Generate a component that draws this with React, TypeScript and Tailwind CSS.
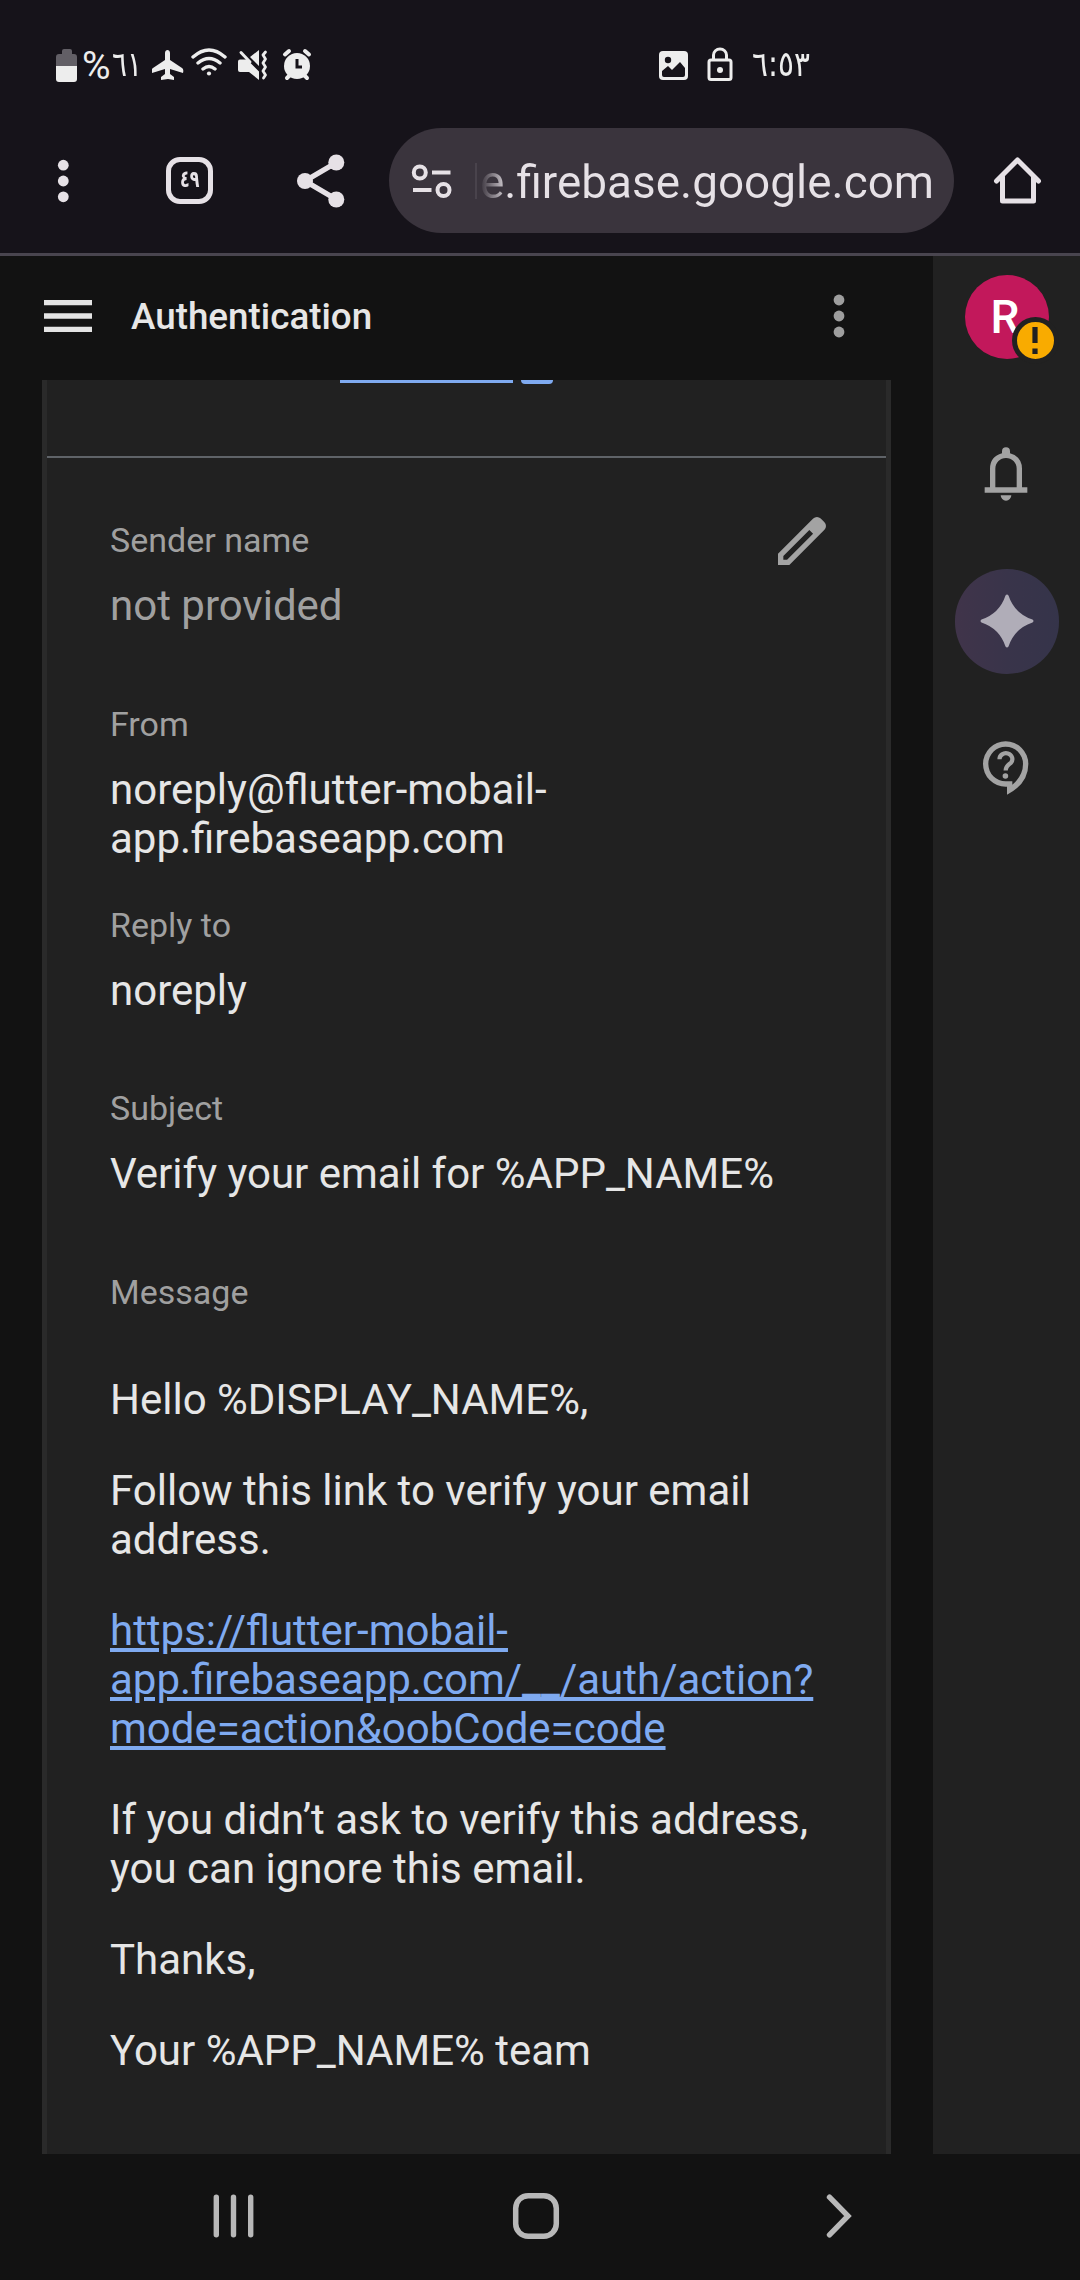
import React from "react";

const Field = ({ label, children, muted }: { label: string; children: React.ReactNode; muted?: boolean }) => (
  <section>
    <h2 className="text-[34px] leading-[49px] text-[#a0a0a0]">{label}</h2>
    <p className={muted ? "mt-4 text-[42px] leading-[49px] text-[#a0a0a0]" : "mt-4 text-[42px] leading-[49px]"}>
      {children}
    </p>
  </section>
);

const StatusBar = () => (
  <div className="flex h-[128px] items-start pt-[46px] text-[#ededed]">
    <svg className="ml-[56px] h-[40px] w-[21px]" viewBox="0 0 21 40">
      <path d="M6 8V5q0-2 2-2h6q2 0 2 2v3h2q3 0 3 3v9H0v-9q0-3 3-3z" fill="#625f66" />
      <path d="M0 20h21v13q0 3-3 3H3q-3 0-3-3z" fill="#ededed" />
    </svg>
    <div className="ml-[5px] flex h-[40px] w-[57px] items-center" dir="ltr">
      <span className="font-['Roboto'] text-[39px] leading-[40px]">%</span>
      <span className="ml-[1px] mt-[-4px] inline-block origin-left scale-x-[.8] font-['DejaVu_Sans',sans-serif] text-[35px] leading-[40px]">٦١</span>
    </div>
    <svg className="ml-[13px] h-[40px] w-[32px]" viewBox="0 0 32 40" fill="currentColor">
      <path d="M13 7c0-4 5-4 5 0v7l12 8q2 1 1 5l-13-4v5l4 3v3l-6-1-7 1v-3l4-3v-5L0 27q-1-4 1-5l12-8z" />
    </svg>
    <svg className="ml-[6px] h-[40px] w-[38px]" viewBox="0 0 38 40" fill="none" stroke="currentColor" strokeWidth="3.4" strokeLinecap="round">
      <path d="M3 11Q19-3 35 11M8 17q11-9 22 0M13 23q6-5 12 0" />
      <circle cx="19" cy="27.500" r="2.1" fill="currentColor" stroke="none" />
    </svg>
    <svg className="ml-[10px] h-[40px] w-[31px]" viewBox="0 0 31 40" fill="currentColor">
      <path d="M2 13.500h7L21 25.500V34L11 26H2q-2 0-2-2v-8.500q0-2 2-2zM12 11l9-7v16z" />
      <path d="M3 6.500l9 9.500" stroke="currentColor" strokeWidth="3" strokeLinecap="round" />
      <path d="M27.500 6l-2.500 3 2.500 4-2.500 4 2.500 4-2.500 4 2.500 4-2 3" fill="none" stroke="currentColor" strokeWidth="2.800" strokeLinecap="round" strokeLinejoin="round" />
    </svg>
    <svg className="ml-[13px] h-[40px] w-[30px]" viewBox="0 0 30 40" fill="none" stroke="currentColor" strokeWidth="4" strokeLinecap="round">
      <circle cx="15" cy="20" r="13" fill="currentColor" stroke="none" />
      <path d="M3 8.500l4-3.500M27 8.500l-4-3.500M5 32l3-3M25 32l-3-3" />
      <path d="M15 13v8h5" stroke="#16131a" strokeWidth="3" strokeLinecap="butt" />
    </svg>
    <svg className="ml-[347px] h-[40px] w-[29px]" viewBox="0 0 29 40">
      <rect y="5" width="29" height="29" rx="4" fill="currentColor" />
      <circle cx="9" cy="14" r="3.200" fill="#16131a" />
      <path d="M3 25l6-5 4 4 8-8 5 6v7q0 2-2 2H5q-2 0-2-2z" fill="#16131a" />
    </svg>
    <svg className="ml-[19px] h-[40px] w-[26px]" viewBox="0 0 26 40" fill="none" stroke="currentColor" strokeWidth="3">
      <rect x="2" y="14" width="22" height="19.500" rx="2" />
      <path d="M6.500 14V9a6.500 6 0 0 1 13 0v5" />
      <circle cx="13" cy="24" r="3" fill="currentColor" stroke="none" />
    </svg>
    <span className="ml-[19px] mt-[-2px] inline-block origin-left scale-x-[.85] font-['DejaVu_Sans',sans-serif] text-[35px] leading-[40px]" dir="ltr">٦:٥٣</span>
  </div>
);

const BrowserBar = () => (
  <div className="flex h-[125px] items-start">
    <div className="flex h-[105px] w-[389px] items-center">
      <svg className="ml-[57px] h-[44px] w-[12px]" viewBox="0 0 12 44" fill="#e6e1e6">
        <circle cx="6.300" cy="6.200" r="5.400" /><circle cx="6.300" cy="22" r="5.400" /><circle cx="6.300" cy="37.800" r="5.400" />
      </svg>
      <div className="ml-[97px] flex h-[47px] w-[47px] items-center justify-center rounded-[14px] border-[5px] border-[#e6e1e6] pb-1 text-[#e6e1e6]" dir="ltr">
        <span className="inline-block scale-x-[.66] font-['DejaVu_Sans',sans-serif] text-[24px] font-bold leading-[36px]">٤٩</span>
      </div>
      <svg className="ml-[84px] h-[54px] w-[48px]" viewBox="0 0 48 54" fill="#e6e1e6">
        <path d="M39.500 8.500L8 27l31.500 18.500" fill="none" stroke="#e6e1e6" strokeWidth="5.300" />
        <circle cx="39.300" cy="8.500" r="8" /><circle cx="8" cy="27" r="8" /><circle cx="39.300" cy="45.500" r="8" />
      </svg>
    </div>
    <div className="flex h-[105px] w-[565px] items-center overflow-hidden rounded-full bg-[#3a343d]">
      <svg className="ml-[22px] h-[36px] w-[42px]" viewBox="0 0 42 36" fill="none" stroke="#e6e1e6" strokeWidth="4">
        <circle cx="8.800" cy="9.500" r="6" /><path d="M21 9.500h18.500M2 27h18.500" /><circle cx="32.500" cy="27" r="6" />
      </svg>
      <div className="ml-[22px] h-[36px] w-[2px] bg-[#49434c]" />
      <span className="ml-[3px] mt-[2px] whitespace-nowrap bg-linear-to-r from-[#3a343d] to-[#e6e1e6] to-[28px] bg-clip-text font-['Roboto'] text-[45.9px] leading-[60px] text-transparent">
        e.firebase.google.com
      </span>
    </div>
    <svg className="ml-[39px] mt-[28px] h-[50px] w-[50px]" viewBox="0 0 50 50" fill="none" stroke="#e6e1e6" strokeWidth="5" strokeLinejoin="round" strokeLinecap="round">
      <path d="M3.500 25L24.500 4l21 21" /><path d="M9.500 21v24h31V21" />
    </svg>
  </div>
);

const AppHeader = () => (
  <header className="flex h-[124px] items-center">
    <svg className="ml-[44px] mt-[-4px] h-[32px] w-[48px]" viewBox="0 0 48 32" fill="#e3e3e3">
      <path d="M0 0h48v5.300H0zM0 13.300h48v5.400H0zM0 26.700h48V32H0z" />
    </svg>
    <h1 className="ml-[39px] mt-[-2px] text-[36.8px] leading-[48px] font-medium text-[#e6e6e6]">Authentication</h1>
    <svg className="ml-auto mr-[88px] mt-[-4px] h-[44px] w-[12px]" viewBox="0 0 12 44" fill="#9e9e9e">
      <circle cx="6" cy="6" r="5.400" /><circle cx="6" cy="22" r="5.400" /><circle cx="6" cy="38" r="5.400" />
    </svg>
  </header>
);

const Template = () => (
  <main className="mx-[42px] h-[1774px] overflow-hidden border-x-[5px] border-[#2a2a2a] bg-[#212121] text-[#e6e6e6]">
    <div className="flex h-[76px] items-start">
      <div className="ml-[293px] h-[3px] w-[173px] bg-[#7faaf0]" />
      <div className="ml-[8px] h-[4px] w-[32px] rounded-b-[4px] bg-[#7faaf0]" />
    </div>
    <div className="h-[2px] bg-[#5f6368]" />
    <div className="relative flex flex-col pl-[63px] pt-[58px]">
      <svg className="absolute left-[723px] top-[51px] h-[64px] w-[64px]" viewBox="0 0 24 24" fill="#a3a3a3">
        <path fillRule="evenodd" d="M3 21v-4.250L16.200 3.575a2 2 0 0 1 2.825 0L20.425 5a2 2 0 0 1 0 2.800L7.250 21zM5 19h1.400l9.750-9.750-1.400-1.400L5 17.600z" />
      </svg>
      <Field label="Sender name" muted>not provided</Field>
      <div className="mt-[70px]"><Field label="From">noreply@flutter-mobail-<br />app.firebaseapp.com</Field></div>
      <div className="mt-[38px]"><Field label="Reply to">noreply</Field></div>
      <div className="mt-[69px]"><Field label="Subject">Verify your email for %APP_NAME%</Field></div>
      <h2 className="mt-[70px] text-[34px] leading-[49px] text-[#a0a0a0]">Message</h2>
      <div className="mt-[58px] flex flex-col gap-[42px] whitespace-nowrap text-[42px] leading-[49px]">
        <p>Hello %DISPLAY_NAME%,</p>
        <p>Follow this link to verify your email<br />address.</p>
        <p>
          <a className="text-[#7faaf0] underline decoration-[4px] underline-offset-[3px]">https://flutter-mobail-<br />app.firebaseapp.com/__/auth/action?<br />mode=action&amp;oobCode=code</a>
        </p>
        <p>If you didn’t ask to verify this address,<br />you can ignore this email.</p>
        <p>Thanks,</p>
        <p>Your %APP_NAME% team</p>
      </div>
    </div>
  </main>
);

const Rail = () => (
  <aside className="flex h-[1898px] w-[147px] flex-col items-center bg-[#212121]">
    <div className="relative mt-[19px] flex h-[84px] w-[84px] items-center justify-center rounded-full bg-[#c2185b] text-[46px] font-medium text-white">
      <span className="mr-[3px]">R</span>
      <div className="absolute left-[47px] top-[42px] flex h-[47px] w-[47px] items-center justify-center rounded-full border-[5px] border-[#212121] bg-[#f9ab00]">
        <svg className="h-[27px] w-[6px]" viewBox="0 0 6 27" fill="#212121"><path d="M.400 0h5.200v16H.400zM.400 21.500h5.200v5.500H.400z" /></svg>
      </div>
    </div>
    <svg className="mr-px mt-[83px] h-[64px] w-[64px]" viewBox="0 0 24 24" fill="#a3a3a3">
      <path fillRule="evenodd" d="M4 19v-2h2v-7q0-4.500 4.500-5.800v-.7a1.500 1.500 0 0 1 3 0v.7Q18 5.500 18 10v7h2v2zm4-2h8v-7a4 4 0 0 0-8 0zM10 20h4a2 2 0 0 1-4 0z" />
    </svg>
    <div className="mt-[63px] flex h-[105px] w-[104px] items-center justify-center rounded-full bg-linear-to-r from-[#40344a] via-[#39344a] to-[#35344a]">
      <svg className="mb-[2px] h-[54px] w-[54px]" viewBox="0 0 54 54" fill="#b0adb8">
        <path d="M25.500 1.500q1.500-2 3 0 6 18 24 24 2 1.500 0 3-18 6-24 24-1.500 2-3 0-6-18-24-24-2-1.500 0-3 18-6 24-24z" />
      </svg>
    </div>
    <svg className="mt-[62px] h-[64px] w-[64px]" viewBox="0 0 24 24" fill="none" stroke="#a3a3a3">
      <path d="M12 22v-3h-.5A8.500 8.500 0 1 1 20 10.500Q20 18 12 22zm2-3.700q4-3.500 4-7.800a6.500 6.500 0 1 0-6.500 6.500H14z" fill="#a3a3a3" fillRule="evenodd" stroke="none" />
      <path d="M9.200 8.700a2.400 2.200 0 1 1 4.300 1.300q-2 1.400-2 2.900" strokeWidth="1.600" />
      <circle cx="11.400" cy="15" r="1.050" fill="#a3a3a3" stroke="none" />
    </svg>
  </aside>
);

const NavBar = () => (
  <nav className="h-[126px] bg-[#121212]">
    <div className="flex h-[123px] items-center">
      <svg className="ml-[213px] h-[44px] w-[41px]" viewBox="0 0 41 44" stroke="#b8b8b8" strokeWidth="5.400" strokeLinecap="round"><path d="M3.300 3.200v37.600M20.500 3.200v37.600M37.700 3.200v37.600" /></svg>
      <svg className="ml-[258px] h-[48px] w-[48px]" viewBox="0 0 48 48" fill="none" stroke="#b8b8b8" strokeWidth="5.500"><rect x="3.700" y="3.700" width="40.600" height="40.600" rx="12.500" /></svg>
      <svg className="ml-[266px] h-[44px] w-[28px]" viewBox="0 0 28 44" fill="none" stroke="#b8b8b8" strokeWidth="5.400" strokeLinecap="round"><path d="M3.500 3.200L22 22 3.500 40.800" /></svg>
    </div>
  </nav>
);

export default function App() {
  return (
    <div className="h-[2280px] w-[1080px] overflow-hidden bg-[#121212] font-['Roboto',sans-serif]">
      <div className="h-[256px] border-b-[3px] border-[#49454f] bg-[#16131a]">
        <StatusBar />
        <BrowserBar />
      </div>
      <div className="flex h-[1898px]">
        <div className="w-[933px]">
          <AppHeader />
          <Template />
        </div>
        <Rail />
      </div>
      <NavBar />
    </div>
  );
}
